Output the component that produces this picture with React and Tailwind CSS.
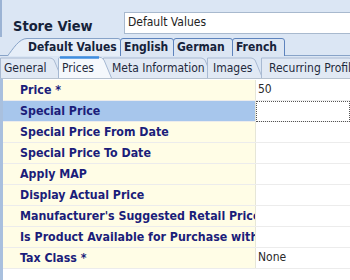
import React from "react";

const font = { fontFamily: '"DejaVu Sans Condensed", "DejaVu Sans", sans-serif' };

function LangTab({ label, w, first, active, left = 4 }) {
  return (
    <div className={`relative h-[19px] shrink-0 ${first ? "" : "-ml-px"}`} style={{ width: w }}>
      <svg className="absolute inset-0" width={w} height="19" viewBox={`0 0 ${w} 19`}>
        {first ? (
          <path d={`M0.5,19 C6,12 12,1.5 20,1.5 L${w - 3},1.5 Q${w - 0.5},1.5 ${w - 0.5},4 L${w - 0.5},19`} fill="#e6eef8" stroke="#87a3c8" />
        ) : (
          <path d={`M0.5,19 L0.5,4 Q0.5,1.5 3,1.5 L${w - 3},1.5 Q${w - 0.5},1.5 ${w - 0.5},4 L${w - 0.5},19`} fill={active ? "#e6eef8" : "#dce6f3"} stroke="#5d83bd" />
        )}
      </svg>
      <span className="absolute top-[3px] text-[12px] font-bold text-[#15223a] leading-[14px] whitespace-nowrap" style={{ left }}>{label}</span>
    </div>
  );
}

function SubTab({ label, w, active, ml = 0, left = 6 }) {
  return (
    <div className="relative h-[22px] shrink-0" style={{ width: w, marginLeft: ml, zIndex: active ? 10 : 1 }}>
      <svg className="absolute inset-0" width={w} height="22" viewBox={`0 0 ${w} 22`}>
        {active ? (
          <>
            <path d={`M0.5,22 L0.5,3 Q0.5,1 3,1 L${w - 14},1 Q${w - 10},1 ${w - 8},4 L${w - 0.5},22`} fill="#f5f8fc" stroke="#a5b8d2" />
            <path d={`M2,1.5 L${w - 13},1.5`} stroke="#3f8ee0" strokeWidth="2.5" />
          </>
        ) : (
          <path d={`M0.5,22 L0.5,2 L${w - 12},2 Q${w - 10},2 ${w - 8},4 L${w - 0.5},22`} fill="#e1e9f4" stroke="#a9bad2" />
        )}
      </svg>
      <span className="absolute top-[5px] text-[12px] text-[#1f2a3c] leading-[14px] whitespace-nowrap" style={{ left }}>{label}</span>
    </div>
  );
}

const rows = [
  { label: "Price *", value: "50" },
  { label: "Special Price", value: "", selected: true },
  { label: "Special Price From Date", value: "" },
  { label: "Special Price To Date", value: "" },
  { label: "Apply MAP", value: "" },
  { label: "Display Actual Price", value: "" },
  { label: "Manufacturer's Suggested Retail Price", value: "" },
  { label: "Is Product Available for Purchase with Google Checkout", value: "" },
  { label: "Tax Class *", value: "None" },
];

export default function App() {
  return (
    <div className="w-[350px] h-[280px] overflow-hidden bg-[#dbe6f4] flex flex-col" style={font}>
      <div className="flex items-start h-[37px] pt-[12px] border-l-2 border-[#9bb3d4]">
        <div className="w-[122px] pl-[11px] pt-[5px] text-[14.5px] leading-[18px] font-bold text-[#15223a]">Store View</div>
        <div className="flex-1 h-[22px] bg-white border border-[#a8b9ce] border-r-0 pl-[3px] text-[12px] leading-[18px] text-[#222]">Default Values</div>
      </div>
      <div className="flex h-[19px] pl-[7px] border-b border-[#87a3c8] relative">
        <LangTab label="Default Values" w={114} first left={21} />
        <LangTab label="English" w={54} left={4} />
        <LangTab label="German" w={60} left={4} />
        <LangTab label="French" w={53} left={4} />
      </div>
      <div className="flex h-[22px] bg-[#dbe6f4]">
        <SubTab label="General" w={62} left={4} />
        <SubTab label="Prices" w={54} ml={-4} active left={4} />
        <SubTab label="Meta Information" w={110} ml={-9} left={9} />
        <SubTab label="Images" w={56} ml={-6} left={6} />
        <SubTab label="Recurring Profile" w={100} ml={-2} left={8} />
      </div>
      <div className="flex-1 bg-white border-l-[3px] border-[#a9c0de] border-t border-t-[#b7c2cf] pt-[1px]">
        {rows.map((r) => (
          <div key={r.label} className="flex h-[21px] border-b border-[#ececec]">
            <div className={`w-[253px] shrink-0 pl-[17px] overflow-hidden whitespace-nowrap text-[12.3px] font-bold leading-[20px] text-[#1b1d7a] border-r border-[#e6e6d8] ${r.selected ? "bg-[#a7c6ec]" : "bg-[#fffde6]"}`}>
              {r.label}
            </div>
            <div className={`flex-1 pl-[2px] text-[12px] leading-[19px] text-[#2a2a2a] ${r.selected ? "border border-dotted border-[#555] mb-[-1px]" : ""}`}>
              {r.value}
            </div>
          </div>
        ))}
      </div>
    </div>
  );
}
